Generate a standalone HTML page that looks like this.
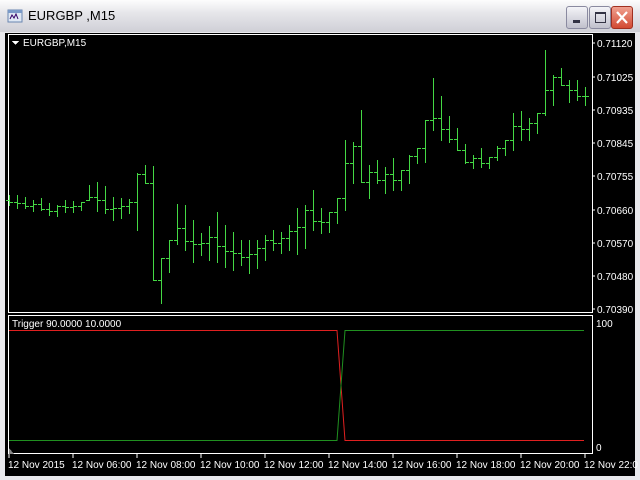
<!DOCTYPE html>
<html><head><meta charset="utf-8"><style>
*{margin:0;padding:0}
body{width:640px;height:480px;overflow:hidden;background:#d4d0c8;font-family:"Liberation Sans",sans-serif;position:relative}
.title{position:absolute;left:0;top:0;width:640px;height:32px;background:linear-gradient(#fdfdfd,#e6e6ea 40%,#cfcfd6);border-bottom:1px solid #a0a0a8}
.ttext{position:absolute;left:28px;top:8px;font-size:13px;color:#000;font-family:"Liberation Sans",sans-serif}
.btn{position:absolute;top:6px;width:20px;height:21px;border:1px solid #8a8aa0;border-radius:3px;background:linear-gradient(#f4f4f8,#c0c0cc)}
.frame{position:absolute;left:0;top:32px;width:640px;height:448px;background:#e8e8ec}
.chart{position:absolute;left:5px;top:33px;width:630px;height:443px;background:#000}
svg text{font-family:"Liberation Sans",sans-serif;font-size:10px;fill:#fff}
</style></head><body>
<div class="title">
<svg style="position:absolute;left:7px;top:8px" width="16" height="16"><rect x="1" y="2" width="14" height="12" fill="#dfe8f4" stroke="#6a86b0"/><rect x="1" y="2" width="14" height="3" fill="#7a9ac8"/><path d="M3 11 l2-4 l2 3 l2-4 l2 5" stroke="#306" fill="none"/></svg>
<div class="ttext">EURGBP ,M15</div>
<div class="btn" style="left:566px"><div style="position:absolute;left:6px;top:13px;width:7px;height:3px;background:#334"></div></div>
<div class="btn" style="left:589px"><div style="position:absolute;left:5px;top:5px;width:9px;height:8px;border:1px solid #334;border-top-width:2px"></div></div>
<div class="btn" style="left:611px;background:linear-gradient(#f0a090,#d24a32);border-color:#a03020"><svg width="20" height="21"><path d="M5 5 L15 16 M15 5 L5 16" stroke="#fff" stroke-width="2.2"/></svg></div>
</div>
<div class="frame"></div>
<div class="chart"></div>
<svg id="s" style="position:absolute;left:0;top:0" width="640" height="480" shape-rendering="crispEdges">
<rect x="8.5" y="34.5" width="584" height="278" fill="none" stroke="#fff"/>
<rect x="8.5" y="315.5" width="584" height="138" fill="none" stroke="#fff"/>
<path d="M12 41 h7 l-3.5 4z" fill="#fff"/>
<text x="23" y="46">EURGBP,M15</text>
<text x="12" y="327">Trigger 90.0000 10.0000</text>
<g stroke="#fff"><path d="M592 43h3M592 77h3M592 110h3M592 143h3M592 176h3M592 210h3M592 243h3M592 276h3M592 309h3"/>
<path d="M9 454v4M73 454v4M137 454v4M201 454v4M265 454v4M329 454v4M393 454v4M457 454v4M521 454v4M585 454v4"/></g>
<g><text x="597" y="47">0.71120</text><text x="597" y="81">0.71025</text><text x="597" y="114">0.70935</text><text x="597" y="147">0.70845</text><text x="597" y="180">0.70755</text><text x="597" y="214">0.70660</text><text x="597" y="247">0.70570</text><text x="597" y="280">0.70480</text><text x="597" y="313">0.70390</text>
<text x="596" y="327">100</text><text x="596" y="451">0</text>
<text x="8" y="468">12 Nov 2015</text><text x="72" y="468">12 Nov 06:00</text><text x="136" y="468">12 Nov 08:00</text><text x="200" y="468">12 Nov 10:00</text><text x="264" y="468">12 Nov 12:00</text><text x="328" y="468">12 Nov 14:00</text><text x="392" y="468">12 Nov 16:00</text><text x="456" y="468">12 Nov 18:00</text><text x="520" y="468">12 Nov 20:00</text><text x="584" y="468">12 Nov 22:0</text></g>
<path d="M9 330.5H337L345 440.5H584" stroke="#e02020" fill="none" shape-rendering="auto"/>
<path d="M9 440.5H337L345 330.5H584" stroke="#209020" fill="none" shape-rendering="auto"/>
<path d="M9 454l5 0l-5-6z" fill="#888"/>
<g id="bars" fill="#44d844" stroke="none"></g>
</svg>
<script>
var D="M9 195v10M17 195v13M25 197v11M33 200v11M41 198v12M49 203v12M57 205v11M65 200v12M73 201v11M81 202v8M89 185v15M97 182v29M105 186v27M113 197v23M121 198v20M129 199v14M137 173v57M145 165v18M153 166v114M161 258v45M169 240v32M177 204v40M185 205v45M193 220v42M201 233v22M209 226v34M217 212v50M225 225v42M233 232v38M241 240v25M249 240v33M257 240v28M265 235v25M273 230v20M281 232v21M289 225v25M297 208v46M305 205v43M313 190v40M321 208v25M329 212v20M337 198v25M345 140v70M353 142v41M361 110v72M369 165v33M377 160v23M385 167v26M393 158v32M401 170v20M409 155v28M417 148v15M425 120v42M433 78v52M441 96v44M449 116v26M457 128v22M465 144v19M473 155v13M481 148v19M489 157v11M497 146v14M505 140v15M513 113v37M521 111v29M529 118v22M537 113v20M545 50v65M553 75v30M561 68v17M569 80v22M577 80v20M585 87v18";
var d=D.match(/M\d+ \d+v\d+/g);
var b=d.map(function(s){var m=s.match(/M(\d+) (\d+)v(\d+)/);return [+m[1],+m[2],+m[2]+ +m[3]];});
var h='';
function r(x,y,w,hh){h+='<rect x="'+x+'" y="'+y+'" width="'+w+'" height="'+hh+'"/>';}
for(var i=0;i<b.length;i++){var x=b[i][0],t=b[i][1],l=b[i][2];
var o=i?Math.min(l,Math.max(t,b[i-1][3])):Math.round((t+l)/2);
var n=b[i+1]||b[i];var c=Math.min(l,Math.max(t,Math.round((n[1]+n[2])/2)));b[i][3]=c;
r(x,t,1,l-t+1);r(x-3,o,3,1);r(x+1,c,3,1);}
document.getElementById('bars').innerHTML=h;
</script>
</body></html>
